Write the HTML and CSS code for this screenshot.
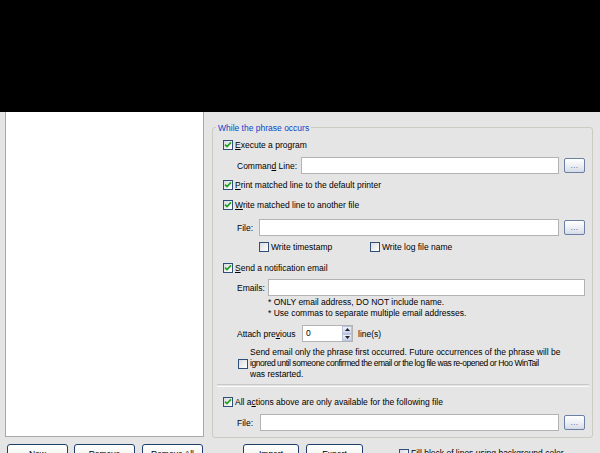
FILE: index.html
```html
<!DOCTYPE html>
<html>
<head>
<meta charset="utf-8">
<link rel="stylesheet" href="styles.css">
</head>
<body>
<div class="topbar"></div>
<div class="main">
  <div class="listbox"></div>
  <fieldset class="group">
    <legend>While the phrase occurs</legend>
    <div class="content">
      <div class="row h14 mt4"><span class="cb"><svg width="8" height="8" viewBox="0 0 8 8"><path d="M1 3.6 L3 5.6 L7 1.4" stroke="#21a121" stroke-width="1.7" fill="none"/></svg></span><span class="txt"><u>E</u>xecute a program</span></div>
      <div class="row h17 mt5 ind"><span class="flabel w-cmd">Comman<u>d</u> Line:</span><span class="input grow"></span><span class="dots">...</span></div>
      <div class="row h14 mt4"><span class="cb"><svg width="8" height="8" viewBox="0 0 8 8"><path d="M1 3.6 L3 5.6 L7 1.4" stroke="#21a121" stroke-width="1.7" fill="none"/></svg></span><span class="txt"><u>P</u>rint matched line to the default printer</span></div>
      <div class="row h14 mt6"><span class="cb"><svg width="8" height="8" viewBox="0 0 8 8"><path d="M1 3.6 L3 5.6 L7 1.4" stroke="#21a121" stroke-width="1.7" fill="none"/></svg></span><span class="txt"><u>W</u>rite matched line to another file</span></div>
      <div class="row h17 mt7 ind"><span class="flabel w-file">File:</span><span class="input grow"></span><span class="dots">...</span></div>
      <div class="row h14 mt4 ind-ts">
        <span class="opt w-ts"><span class="cb"></span><span class="txt">Write timestamp</span></span>
        <span class="opt"><span class="cb"></span><span class="txt">Write log file name</span></span>
      </div>
      <div class="row h14 mt7"><span class="cb"><svg width="8" height="8" viewBox="0 0 8 8"><path d="M1 3.6 L3 5.6 L7 1.4" stroke="#21a121" stroke-width="1.7" fill="none"/></svg></span><span class="txt"><u>S</u>end a notification email</span></div>
      <div class="row h17 mt4 ind"><span class="flabel w-em">Emails:</span><span class="input grow"></span></div>
      <div class="notes mt1">* ONLY email address, DO NOT include name.<br>* Use commas to separate multiple email addresses.</div>
      <div class="row h17 mt6 ind"><span class="flabel w-att">Attach pre<u>v</u>ious</span>
        <span class="spin"><span class="spinval">0</span><span class="spinbtns"><span class="sb"><svg width="5" height="3" viewBox="0 0 5 3"><path d="M0 3 L2.5 0 L5 3 Z" fill="#222"/></svg></span><span class="sb"><svg width="5" height="3" viewBox="0 0 5 3"><path d="M0 0 L2.5 3 L5 0 Z" fill="#222"/></svg></span></span></span>
        <span class="unit">line(s)</span></div>
      <div class="row mt5 ind-once"><span class="cb"></span><span class="txt para">Send email only the phrase first occurred. Future occurrences of the phrase will be<br><span class="tight">ignored until someone confirmed the email or the log file was re-opened or Hoo WinTail</span><br>was restarted.</span></div>
      <div class="sep mt4"></div>
      <div class="row h14 mt8"><span class="cb"><svg width="8" height="8" viewBox="0 0 8 8"><path d="M1 3.6 L3 5.6 L7 1.4" stroke="#21a121" stroke-width="1.7" fill="none"/></svg></span><span class="txt">All a<u>c</u>tions above are only available for the following file</span></div>
      <div class="row h17 mt5 ind"><span class="flabel w-file2">File:</span><span class="input grow"></span><span class="dots">...</span></div>
    </div>
  </fieldset>
</div>
<div class="buttons">
  <span class="btn w61">New</span>
  <span class="btn w61 gap6">Remove</span>
  <span class="btn w61 gap7">Remove All</span>
  <span class="btn w56 gap40">Import</span>
  <span class="btn w57 gap7">Export</span>
  <span class="opt fill"><span class="cb"></span><span class="txt">Fill block of lines using background color</span></span>
</div>
</body>
</html>
```

FILE: styles.css
```css
html, body {
  margin: 0;
  padding: 0;
}
body {
  width: 600px;
  height: 453px;
  overflow: hidden;
  background: #e5e5e5;
  font-family: "Liberation Sans", Arial, sans-serif;
  font-size: 8.5px;
  color: #000;
}
.topbar {
  height: 112px;
  background: #000;
}
.main {
  display: flex;
  align-items: flex-start;
  padding-left: 5px;
}
.listbox {
  width: 199px;
  height: 325px;
  box-sizing: border-box;
  background: #fff;
  border: 1px solid #a8a8a8;
  border-top: none;
}
.group {
  margin: 9px 0 0 8px;
  width: 381px;
  height: 317px;
  box-sizing: border-box;
  border: 1px solid #cbcbc2;
  border-radius: 3px;
  padding: 0 7px 0 0;
  min-inline-size: 0;
}
.group legend {
  color: #0a46c8;
  padding: 2px 2px 0 2px;
  margin-left: 3px;
  line-height: 11px;
}
.content {
  padding-left: 10px;
}
.row {
  display: flex;
  align-items: center;
}
.h14 { height: 14px; }
.h17 { height: 17px; }
.mt1 { margin-top: 1px; }
.mt4 { margin-top: 4px; }
.mt5 { margin-top: 5px; }
.mt6 { margin-top: 6px; }
.mt7 { margin-top: 7px; }
.mt8 { margin-top: 8px; }
.ind { padding-left: 14px; }
.ind-ts { padding-left: 36px; }
.ind-once { padding-left: 15px; }
.cb {
  flex: none;
  width: 10px;
  height: 10px;
  box-sizing: border-box;
  border: 1px solid #2d4f78;
  background: linear-gradient(135deg, #d9dbe0 0%, #f4f4f4 70%, #ffffff 100%);
  display: flex;
  align-items: center;
  justify-content: center;
}
.cb svg { display: block; }
.txt {
  margin-left: 2px;
  white-space: nowrap;
  line-height: 11px;
}
.para {
  line-height: 11px;
}
.tight {
  letter-spacing: -0.45px;
}
.opt {
  display: flex;
  align-items: center;
}
.w-ts { width: 111px; }
.flabel {
  flex: none;
  white-space: nowrap;
}
.w-cmd { width: 64px; }
.w-file { width: 22px; }
.w-file2 { width: 23px; }
.w-em { width: 31px; }
.w-att { width: 65px; }
.input {
  height: 17px;
  box-sizing: border-box;
  background: #fff;
  border: 1px solid #b3b3b3;
}
.grow { flex: 1; }
.dots {
  flex: none;
  margin-left: 5px;
  width: 21px;
  height: 15px;
  box-sizing: border-box;
  border: 1px solid #6a7fa3;
  border-radius: 2px;
  background: linear-gradient(#ffffff, #e9ecf3 60%, #d5dae6);
  color: #33508a;
  font-size: 8px;
  line-height: 14px;
  text-align: center;
  letter-spacing: 0.5px;
}
.notes {
  padding-left: 45px;
  line-height: 11px;
  height: 22px;
  white-space: nowrap;
}
.spin {
  flex: none;
  width: 51px;
  height: 17px;
  box-sizing: border-box;
  border: 1px solid #b3b3b3;
  background: #fff;
  display: flex;
}
.spinval {
  flex: 1;
  padding-left: 3px;
  line-height: 15px;
}
.spinbtns {
  width: 10px;
  display: flex;
  flex-direction: column;
}
.sb {
  flex: 1;
  display: flex;
  align-items: center;
  justify-content: center;
  background: linear-gradient(#eef1f8, #c9d3e8);
  border: 1px solid #b9c4dc;
}
.sb svg { display: block; }
.unit {
  margin-left: 5px;
}
.sep {
  height: 1px;
  margin-left: -6px;
  margin-right: -4px;
  border-top: 1px solid #c8c8c8;
  border-bottom: 1px solid #fafafa;
}
.buttons {
  display: flex;
  align-items: flex-start;
  margin-top: 6px;
  padding-left: 7px;
}
.btn {
  flex: none;
  height: 21px;
  box-sizing: border-box;
  border: 1px solid #1f3d6b;
  border-radius: 3px;
  background: linear-gradient(#ffffff, #f3f3ef 55%, #dedbd2);
  text-align: center;
  line-height: 19px;
  white-space: nowrap;
}
.w61 { width: 61px; }
.w56 { width: 56px; }
.w57 { width: 57px; }
.gap6 { margin-left: 6px; }
.gap7 { margin-left: 7px; }
.gap40 { margin-left: 40px; }
.fill {
  margin-left: 36px;
  margin-top: 4px;
}
```
